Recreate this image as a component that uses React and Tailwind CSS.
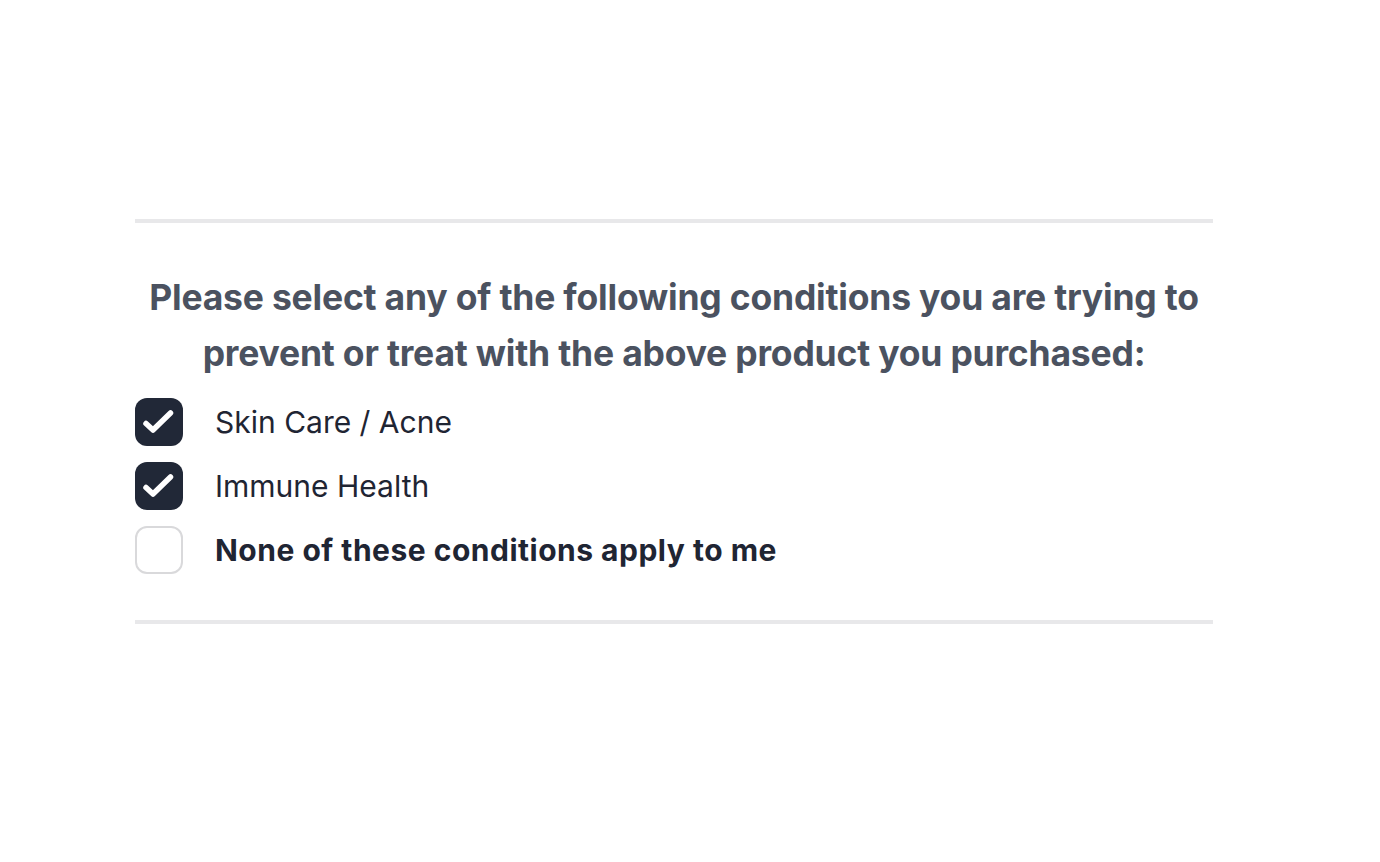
import { useState } from "react";

const options = [
  { id: "skin", label: "Skin Care / Acne", bold: false },
  { id: "immune", label: "Immune Health", bold: false },
  { id: "none", label: "None of these conditions apply to me", bold: true },
];

function Check() {
  return (
    <svg viewBox="0 0 48 48" className="h-[48px] w-[48px]" fill="none">
      <path
        d="M11 25.5l7 6.5L35.5 15"
        stroke="white"
        strokeWidth="5.5"
        strokeLinecap="round"
        strokeLinejoin="round"
      />
    </svg>
  );
}

export default function App() {
  const [selected, setSelected] = useState({ skin: true, immune: true, none: false });

  const toggle = (id) => setSelected((s) => ({ ...s, [id]: !s[id] }));

  return (
    <main
      className="min-h-screen bg-white"
      style={{ fontFamily: "Inter, 'Noto Sans', sans-serif" }}
    >
      <div className="ml-[135px] w-[1078px] pt-[219px]">
        <div className="h-[4px] bg-[#e8e8ea]" />

        <h2 className="mt-[47px] text-center text-[35.5px] font-bold leading-[56px] tracking-[-0.2px] text-[#4b5260]">
          Please select any of the following conditions you are trying to
          prevent or treat with the above product you purchased:
        </h2>

        <div className="mt-[16px] flex flex-col gap-[16px]">
          {options.map((o) => (
            <label
              key={o.id}
              className="flex cursor-pointer items-center gap-[32px]"
            >
              <button
                type="button"
                onClick={() => toggle(o.id)}
                className={
                  selected[o.id]
                    ? "flex h-[48px] w-[48px] items-center justify-center overflow-hidden rounded-[12px] bg-[#212837]"
                    : "flex h-[48px] w-[48px] items-center justify-center rounded-[12px] border-2 border-[#d9d9db] bg-white"
                }
              >
                {selected[o.id] && <Check />}
              </button>
              <span
                className={
                  o.bold
                    ? "text-[30px] font-bold tracking-[0.5px] text-[#1f2533]"
                    : "text-[30px] text-[#1f2533]"
                }
              >
                {o.label}
              </span>
            </label>
          ))}
        </div>

        <div className="mt-[46px] h-[4px] bg-[#e8e8ea]" />
      </div>
    </main>
  );
}
